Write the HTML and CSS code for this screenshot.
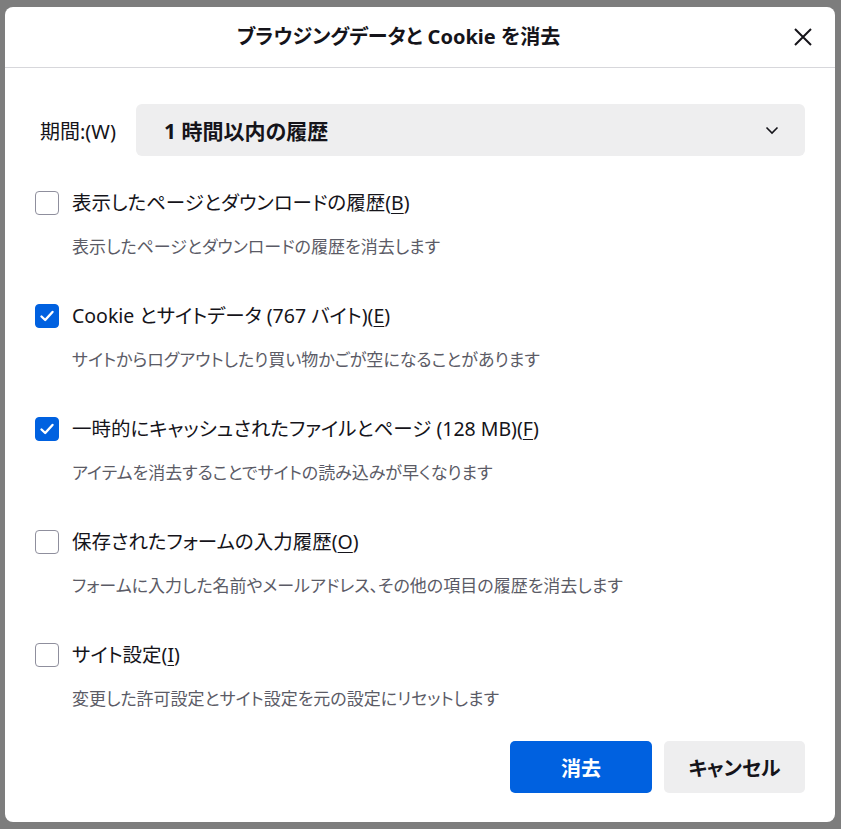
FILE: index.html
```html
<!DOCTYPE html>
<html lang="ja">
<head>
<meta charset="utf-8">
<link rel="stylesheet" href="styles.css">
</head>
<body>
<div class="dialog">
  <div class="header">
    <h1 class="title">ブラウジングデータと Cookie を消去</h1>
    <button class="close" aria-label="閉じる">
      <svg width="20" height="20" viewBox="0 0 20 20"><path d="M2 2 L18 18 M18 2 L2 18" stroke="#15141a" stroke-width="2" fill="none"/></svg>
    </button>
  </div>
  <div class="body">
    <div class="period">
      <span class="period-label">期間:(W)</span>
      <div class="select">
        <span class="select-text">1 時間以内の履歴</span>
        <svg class="chev" width="14" height="9" viewBox="0 0 14 9"><path d="M1.5 1.5 L7 7 L12.5 1.5" stroke="#15141a" stroke-width="1.6" fill="none"/></svg>
      </div>
    </div>
    <div class="items">
      <div class="item">
        <div class="row"><span class="cb"></span><span class="label">表示したページとダウンロードの履歴(<u>B</u>)</span></div>
        <div class="desc">表示したページとダウンロードの履歴を消去します</div>
      </div>
      <div class="item">
        <div class="row"><span class="cb checked"><svg width="16" height="16" viewBox="0 0 16 16"><path d="M2.5 8.5 L6.2 12 L13.5 4" stroke="#fff" stroke-width="2.4" fill="none" stroke-linecap="round" stroke-linejoin="round"/></svg></span><span class="label">Cookie とサイトデータ (767 バイト)(<u>E</u>)</span></div>
        <div class="desc">サイトからログアウトしたり買い物かごが空になることがあります</div>
      </div>
      <div class="item">
        <div class="row"><span class="cb checked"><svg width="16" height="16" viewBox="0 0 16 16"><path d="M2.5 8.5 L6.2 12 L13.5 4" stroke="#fff" stroke-width="2.4" fill="none" stroke-linecap="round" stroke-linejoin="round"/></svg></span><span class="label">一時的にキャッシュされたファイルとページ (128 MB)(<u>F</u>)</span></div>
        <div class="desc">アイテムを消去することでサイトの読み込みが早くなります</div>
      </div>
      <div class="item">
        <div class="row"><span class="cb"></span><span class="label">保存されたフォームの入力履歴(<u>O</u>)</span></div>
        <div class="desc">フォームに入力した名前やメールアドレス、その他の項目の履歴を消去します</div>
      </div>
      <div class="item">
        <div class="row"><span class="cb"></span><span class="label">サイト設定(<u>I</u>)</span></div>
        <div class="desc">変更した許可設定とサイト設定を元の設定にリセットします</div>
      </div>
    </div>
    <div class="buttons">
      <button class="btn primary">消去</button>
      <button class="btn secondary">キャンセル</button>
    </div>
  </div>
</div>
</body>
</html>
```

FILE: styles.css
```css
* { box-sizing: border-box; }
html, body { margin: 0; padding: 0; }
body {
  width: 841px;
  height: 829px;
  background: #7d7d7d;
  font-family: "Noto Sans", "Noto Sans CJK JP", sans-serif;
  font-feature-settings: "palt";
  color: #15141a;
  overflow: hidden;
  padding: 7px 6px 7px 5px;
}
.dialog {
  width: 830px;
  height: 815px;
  background: #fff;
  border-radius: 8px;
  display: flex;
  flex-direction: column;
}
.header {
  height: 61px;
  border-bottom: 1px solid #d7d7db;
  display: flex;
  align-items: center;
  padding-right: 21px;
}
.title {
  flex: 1;
  text-align: center;
  margin: 0;
  font-size: 20px;
  font-weight: 700;
  line-height: 26px;
}
.close {
  width: 22px;
  height: 22px;
  padding: 0;
  border: 0;
  background: transparent;
  display: flex;
  align-items: center;
  justify-content: center;
}
.body {
  padding: 36px 30px 29px 30px;
  display: flex;
  flex-direction: column;
  flex: 1;
}
.period {
  display: flex;
  align-items: center;
  padding-left: 5px;
}
.period-label {
  font-size: 20px;
  width: 96px;
  flex: none;
}
.select {
  flex: 1;
  height: 52px;
  background: #eeeeef;
  border-radius: 6px;
  display: flex;
  align-items: center;
  justify-content: space-between;
  padding: 0 26px 0 28px;
}
.select-text {
  font-size: 21px;
  font-weight: 700;
}
.items {
  margin-top: 35px;
  display: flex;
  flex-direction: column;
  gap: 45px;
}
.row {
  display: flex;
  align-items: center;
  gap: 13px;
  height: 24px;
}
.cb {
  width: 24px;
  height: 24px;
  border: 1px solid #8f8f9d;
  border-radius: 4px;
  display: flex;
  align-items: center;
  justify-content: center;
  flex: none;
}
.cb.checked {
  background: #0061e0;
  border-color: #0061e0;
}
.label {
  font-size: 19.5px;
  line-height: 24px;
}
.label u { text-underline-offset: 3px; }
.desc {
  margin-top: 20px;
  margin-left: 37px;
  font-size: 17px;
  line-height: 24px;
  color: #5b5b66;
}
.buttons {
  margin-top: auto;
  display: flex;
  justify-content: flex-end;
  gap: 12px;
}
.btn {
  width: 142px;
  height: 52px;
  border: 0;
  border-radius: 5px;
  font-family: inherit;
  font-feature-settings: "palt";
  font-size: 20px;
  font-weight: 700;
}
.btn.primary { background: #0061e0; color: #fff; }
.btn.secondary { background: #eeeeef; color: #15141a; width: 141px; }
```
